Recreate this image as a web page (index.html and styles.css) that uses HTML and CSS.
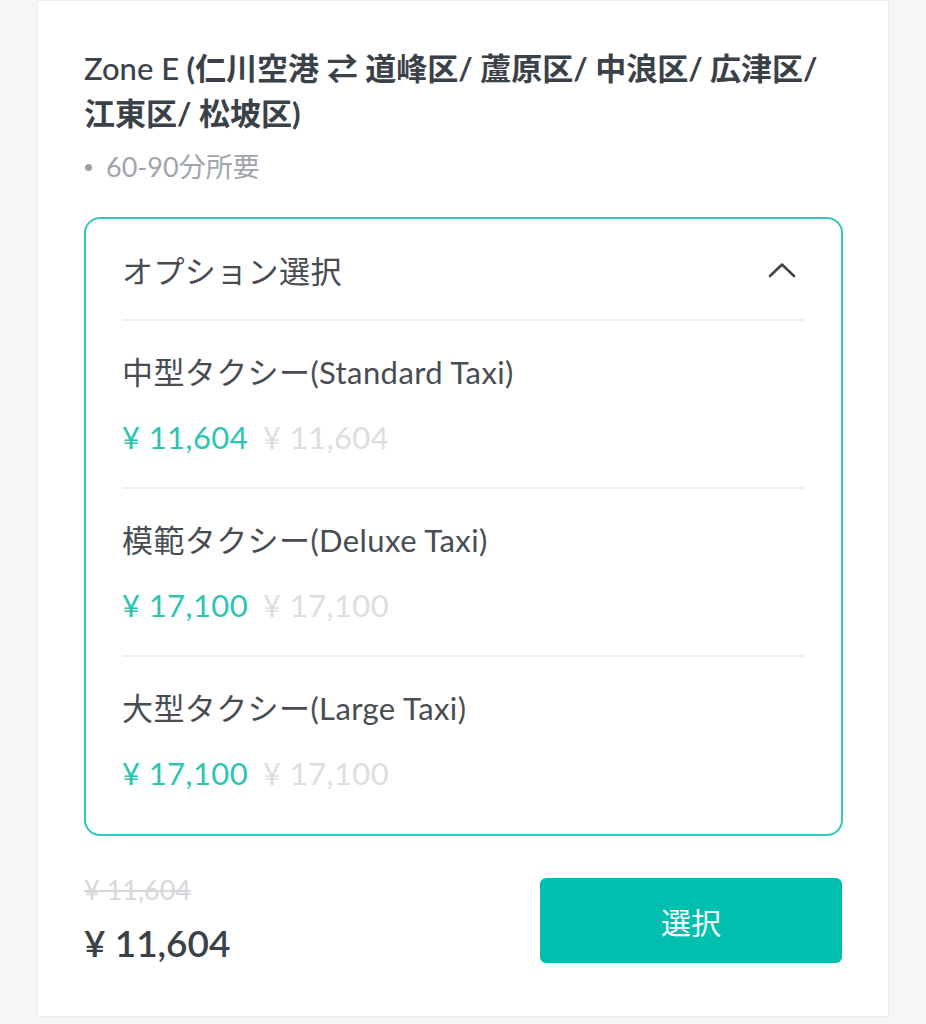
FILE: index.html
```html
<!DOCTYPE html>
<html lang="ja">
<head>
<meta charset="utf-8">
<title>Zone E</title>
<link rel="stylesheet" href="styles.css">
</head>
<body>
<div class="card">
  <h1 class="title"><span class="title-latin">Zone E</span> (仁川空港 ⇄ 道峰区/ 蘆原区/ 中浪区/ 広津区/ 江東区/ 松坡区)</h1>
  <div class="duration"><span class="dot"></span><span>60-90分所要</span></div>

  <div class="options">
    <div class="options-head">
      <span>オプション選択</span>
      <svg class="chevron" width="28" height="16" viewBox="0 0 28 16"><path d="M2 14 L14 2.5 L26 14" fill="none" stroke="#41464c" stroke-width="2.6" stroke-linecap="round" stroke-linejoin="round"/></svg>
    </div>
    <div class="option">
      <div class="option-name">中型タクシー(Standard Taxi)</div>
      <div class="option-price"><span class="price-now">¥ 11,604</span><span class="price-was">¥ 11,604</span></div>
    </div>
    <div class="option">
      <div class="option-name">模範タクシー(Deluxe Taxi)</div>
      <div class="option-price"><span class="price-now">¥ 17,100</span><span class="price-was">¥ 17,100</span></div>
    </div>
    <div class="option">
      <div class="option-name">大型タクシー(Large Taxi)</div>
      <div class="option-price"><span class="price-now">¥ 17,100</span><span class="price-was">¥ 17,100</span></div>
    </div>
  </div>

  <div class="footer">
    <div class="total">
      <div class="total-was">¥ 11,604</div>
      <div class="total-now">¥ 11,604</div>
    </div>
    <button class="select-btn">選択</button>
  </div>
</div>
</body>
</html>
```
FILE: styles.css
```css
html, body {
  margin: 0;
  padding: 0;
  background: #f5f6f8;
}
body {
  font-family: "Lato", "Noto Sans CJK JP", sans-serif;
  color: #3b4148;
}
.card {
  box-sizing: border-box;
  width: 852px;
  margin-left: 37px;
  background: #ffffff;
  border: 1px solid #eaecef;
  padding: 45px 45px 47px 46px;
}
.title {
  margin: 0;
  font-size: 31px;
  line-height: 45px;
  font-weight: 700;
  color: #3b4148;
}
.title-latin {
  font-weight: 500;
}
.duration {
  display: flex;
  align-items: center;
  margin-top: 13px;
  font-size: 27px;
  line-height: 36px;
  color: #a0a5ad;
}
.dot {
  width: 7px;
  height: 7px;
  border-radius: 50%;
  background: #9aa0a8;
  margin: 0 14px 0 1px;
}
.options {
  margin-top: 32px;
  border: 2px solid #2cc9b9;
  border-radius: 16px;
  padding: 0 36px 11px;
}
.options-head {
  display: flex;
  align-items: center;
  justify-content: space-between;
  padding: 30px 0 25px;
  font-size: 31px;
  line-height: 45px;
  letter-spacing: 0.4px;
  color: #464b51;
}
.chevron {
  margin-right: 9px;
  margin-top: -4px;
}
.option {
  border-top: 2px solid #efefef;
  padding: 29px 0 27px;
}
.option-name {
  font-size: 31px;
  line-height: 45px;
  letter-spacing: 0.4px;
  color: #484d53;
}
.option-price {
  margin-top: 20px;
  font-size: 31px;
  line-height: 45px;
  letter-spacing: 0.4px;
  display: flex;
  gap: 15px;
}
.price-now {
  color: #2cc5b4;
}
.price-was {
  color: #dcdee2;
}
.footer {
  display: flex;
  justify-content: space-between;
  align-items: center;
  margin-top: 36px;
}
.total-was {
  font-size: 27px;
  line-height: 36px;
  color: #d6d8dc;
  text-decoration: line-through;
}
.total-now {
  margin-top: 9px;
  font-size: 37px;
  line-height: 52px;
  font-weight: 600;
  color: #3b4148;
}
.select-btn {
  width: 302px;
  height: 85px;
  border: none;
  border-radius: 6px;
  background: #00bfae;
  color: #ffffff;
  font-family: "Lato", "Noto Sans CJK JP", sans-serif;
  font-size: 30px;
  padding: 0;
  margin-right: 1px;
}
```
